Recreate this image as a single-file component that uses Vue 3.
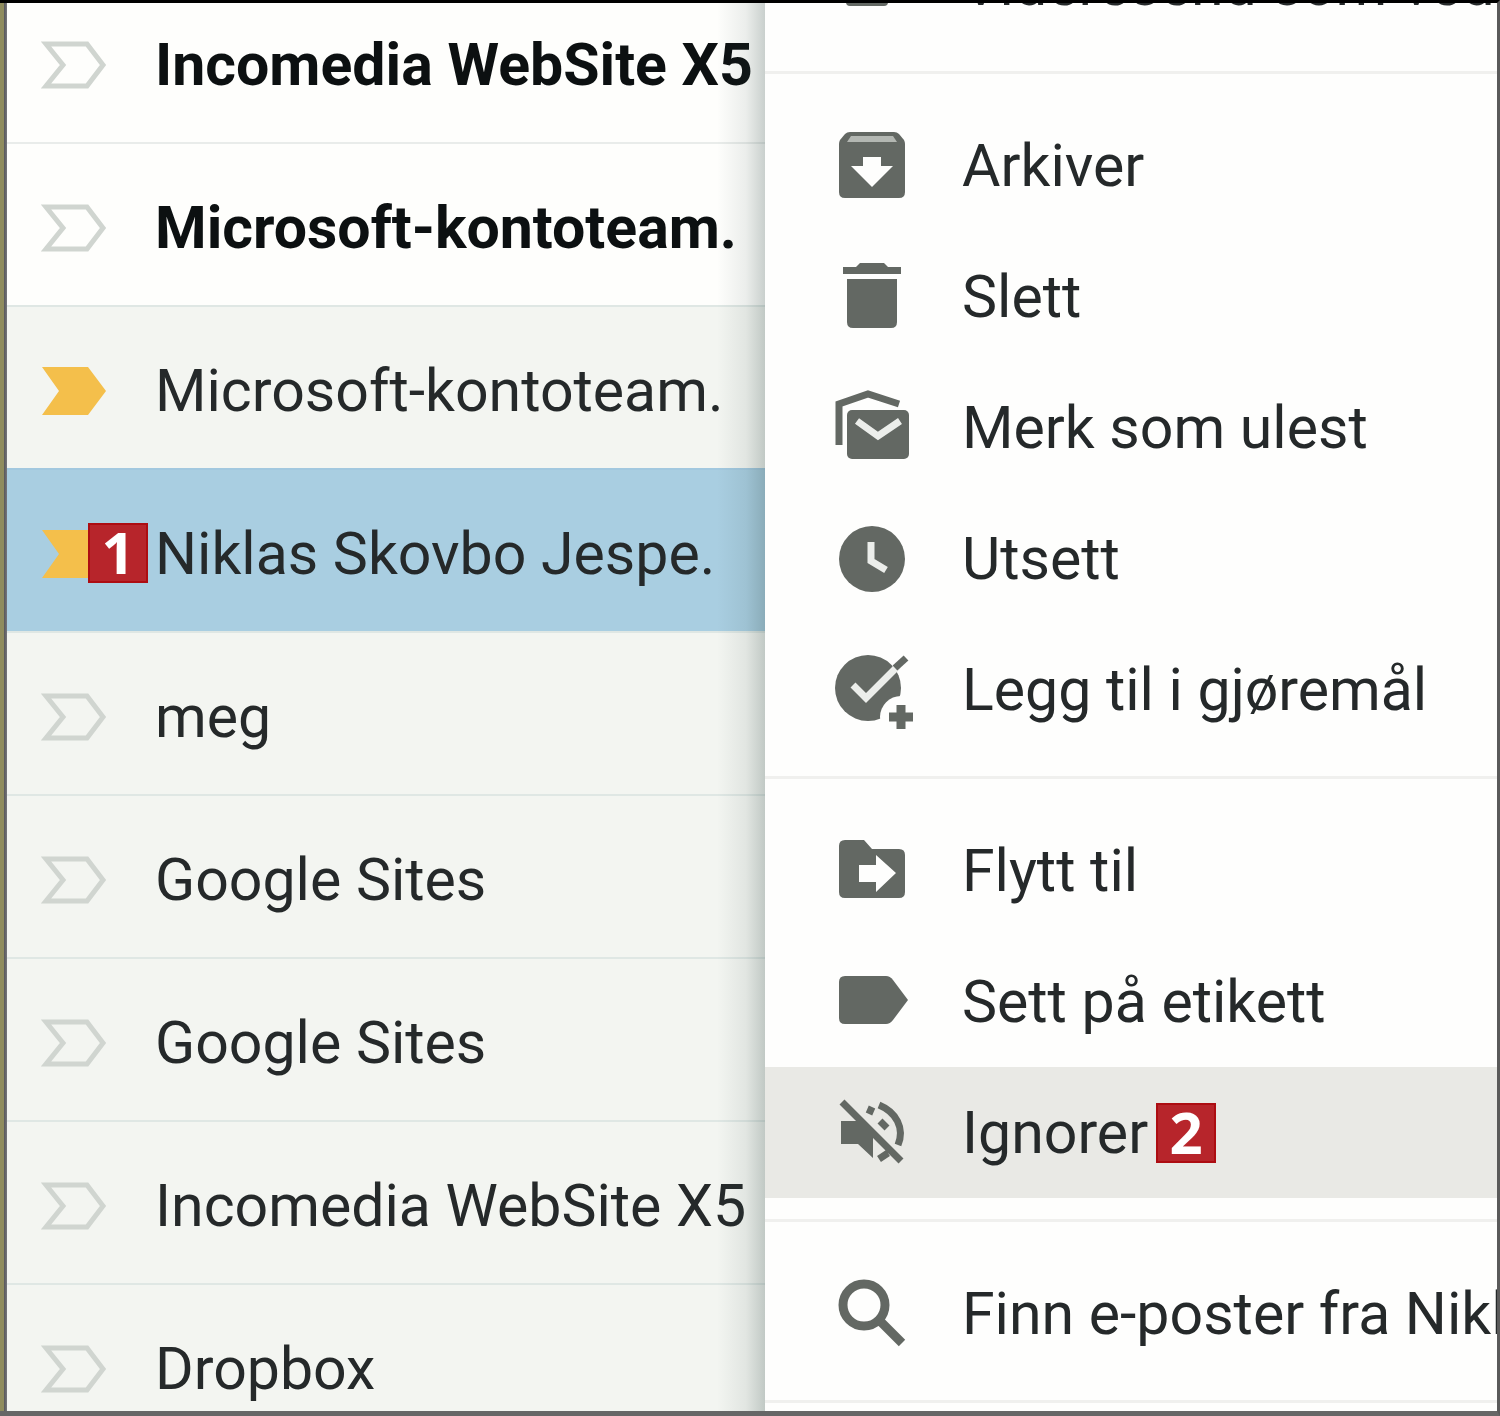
<script setup>
const mails = [
  { sender: 'Incomedia WebSite X5', unread: true },
  { sender: 'Microsoft-kontoteam.', unread: true },
  { sender: 'Microsoft-kontoteam.', important: true },
  { sender: 'Niklas Skovbo Jespe.', important: true, selected: true, step: 1 },
  { sender: 'meg' },
  { sender: 'Google Sites' },
  { sender: 'Google Sites' },
  { sender: 'Incomedia WebSite X5' },
  { sender: 'Dropbox' },
]

const groups = [
  [{ icon: 'forward', label: 'Videresend som vedlegg' }],
  [
    { icon: 'archive', label: 'Arkiver' },
    { icon: 'trash', label: 'Slett' },
    { icon: 'unread', label: 'Merk som ulest' },
    { icon: 'clock', label: 'Utsett' },
    { icon: 'task', label: 'Legg til i gjøremål' },
  ],
  [
    { icon: 'move', label: 'Flytt til' },
    { icon: 'label', label: 'Sett på etikett' },
    { icon: 'mute', label: 'Ignorer', active: true, step: 2 },
  ],
  [{ icon: 'search', label: 'Finn e-poster fra Nikl' }],
]
</script>

<template>
  <main class="window">
    <ul class="mails">
      <li
        v-for="(mail, i) in mails"
        :key="i"
        class="mail"
        :class="{ unread: mail.unread, selected: mail.selected }"
      >
        <button class="marker" :class="{ important: mail.important }" type="button">
          <svg viewBox="0 0 66 50" aria-hidden="true">
            <path v-if="mail.important" d="M1 1H47L65 25L47 49H1L18 25Z" />
            <path v-else d="M5 4H46L62 25L46 46H5L22 25Z" />
          </svg>
          <span v-if="mail.step" class="step pinned">{{ mail.step }}</span>
        </button>
        <a class="sender" href="#">{{ mail.sender }}</a>
      </li>
    </ul>

    <nav class="menu">
      <div v-for="(group, g) in groups" :key="g" class="group">
        <button
          v-for="item in group"
          :key="item.label"
          class="item"
          :class="{ active: item.active }"
          type="button"
        >
          <svg class="icon" viewBox="0 0 88 88" aria-hidden="true">
            <rect v-if="item.icon === 'forward'" x="18" y="16" width="42" height="49" rx="4" />
            <template v-else-if="item.icon === 'archive'">
              <path d="M22 10H66Q69 10 71 12L76 18Q77 20 77 22V70Q77 76 71 76H17Q11 76 11 70V22Q11 20 12 18L17 12Q19 10 22 10Z" />
              <path class="pale" d="M23 14H65L69 20H19Z" />
              <path class="cut" d="M35 35H53V44H65L44 65L23 44H35Z" />
            </template>
            <template v-else-if="item.icon === 'trash'">
              <path d="M15 14H28L32 10H56L60 14H73V21H15Z" />
              <path d="M19 26H69V69Q69 75 63 75H25Q19 75 19 69Z" />
            </template>
            <template v-else-if="item.icon === 'unread'">
              <path class="line" d="M11 61V20L40 10L71 20" />
              <rect x="19" y="26" width="62" height="49" rx="5" />
              <path class="line light" d="M29 37L50 52L72 37" />
            </template>
            <template v-else-if="item.icon === 'clock'">
              <circle cx="44" cy="44" r="33" />
              <path class="line light" d="M43 27V46L58 55" />
            </template>
            <template v-else-if="item.icon === 'task'">
              <circle cx="40" cy="42" r="33" />
              <path class="line light" d="M25 39L38 52L70 20" />
              <path class="line" d="M67 22L78 12" />
              <circle class="cut" cx="73" cy="71" r="21" />
              <path class="line thick" d="M73 59V83M61 71H85" />
            </template>
            <template v-else-if="item.icon === 'move'">
              <path d="M17 13H36L44 22H71Q77 22 77 28V65Q77 71 71 71H17Q11 71 11 65V19Q11 13 17 13Z" />
              <path class="cut" d="M31 38H48V28L68 46L48 65V55H31Z" />
            </template>
            <path
              v-else-if="item.icon === 'label'"
              d="M17 18H58Q62 18 65 22L80 42L65 62Q62 66 58 66H17Q11 66 11 60V24Q11 18 17 18Z"
            />
            <template v-else-if="item.icon === 'mute'">
              <path d="M13 32H30L45 47V69L30 55H13Z" />
              <path class="line" d="M14 13L73 72M51 16C68 23 77 39 70 56M51 70L60 64" />
              <path class="line" d="M41 25L44 18M52 32L59 39" />
            </template>
            <template v-else-if="item.icon === 'search'">
              <circle class="line lens" cx="36" cy="35" r="21" />
              <path class="line lens" d="M51 50L74 73" />
            </template>
          </svg>
          <span class="label">{{ item.label }}</span>
          <span v-if="item.step" class="step">{{ item.step }}</span>
        </button>
      </div>
    </nav>
  </main>
</template>

<style>
body {
  margin: 0;
}
</style>

<style scoped>
.window {
  position: relative;
  display: grid;
  grid-template-columns: 51% minmax(0, 1fr);
  height: 100vh;
  overflow: hidden;
  font-family: Roboto, sans-serif;
  font-size: 59px;
  line-height: 72px;
  color: #25292a;
  background: #fefefc;
}

/* picture frame drawn over the cropped content */
.window::after {
  content: '';
  position: absolute;
  inset: 0;
  border-style: solid;
  border-width: 3px 3px 5px 0;
  border-color: #000 #5a5a5a #666;
  pointer-events: none;
}

.mails {
  margin: -21px 0 0;
  padding: 0 0 0 7px;
  list-style: none;
  background: linear-gradient(to right, #8f8c5e 4px, #56565a 4px, #77777b 7px);
  min-width: 0;
}

.mail {
  display: flex;
  align-items: center;
  gap: 48px;
  box-sizing: border-box;
  height: 163px;
  padding: 6px 0 0 34px;
  border-top: 2px solid #dfe7e4;
  background: #f3f5f1;
  white-space: nowrap;
}

.mail.unread {
  background: #fefefc;
  font-weight: 700;
  color: #0c1011;
  border-color: #e9ecea;
}

.mail.selected {
  background: #a9cee1;
  border-color: #a2c8df;
}

.marker {
  position: relative;
  flex: none;
  width: 66px;
  height: 50px;
  padding: 0;
  border: 0;
  background: none;
}

.marker svg {
  display: block;
  fill: none;
  stroke: #d0d5d0;
  stroke-width: 5px;
}

.marker.important svg {
  fill: #f4bf4b;
  stroke: none;
}

.sender {
  color: inherit;
  text-decoration: none;
}

.step {
  flex: none;
  box-sizing: border-box;
  width: 60px;
  height: 60px;
  border: 2px solid #ad0d12;
  background: #b7252b;
  color: #fff;
  font: 700 58px/54px 'Open Sans', sans-serif;
  text-align: center;
}

.pinned {
  position: absolute;
  left: 47px;
  top: -6px;
}

.menu {
  position: relative;
  margin-top: -107px;
  background: #fefefd;
}

.menu::before {
  content: '';
  position: absolute;
  inset: 0 100% 0 auto;
  width: 48px;
  background: linear-gradient(to right, rgba(50, 75, 70, 0), rgba(50, 75, 70, 0.09) 60%, rgba(50, 75, 70, 0.26));
}

.group {
  padding: 26px 0 21px;
  border-bottom: 3px solid #f0f0ee;
}

.item {
  display: flex;
  align-items: center;
  width: 100%;
  height: 131px;
  padding: 0 0 0 63px;
  border: 0;
  background: none;
  font: inherit;
  color: inherit;
  text-align: left;
  white-space: nowrap;
  overflow: hidden;
}

.item.active {
  background: #e9e9e5;
}

.icon {
  flex: none;
  width: 88px;
  height: 88px;
  margin-right: 46px;
  fill: #636863;
}

.label {
  margin-right: 8px;
}

.icon .cut {
  fill: #fefefd;
}

.icon .pale {
  fill: #b3b7b2;
}

.icon .line {
  fill: none;
  stroke: #636863;
  stroke-width: 7px;
}

.icon .light {
  stroke: #eceeeb;
}

.icon .thick,
.icon .lens {
  stroke-width: 9px;
}
</style>
